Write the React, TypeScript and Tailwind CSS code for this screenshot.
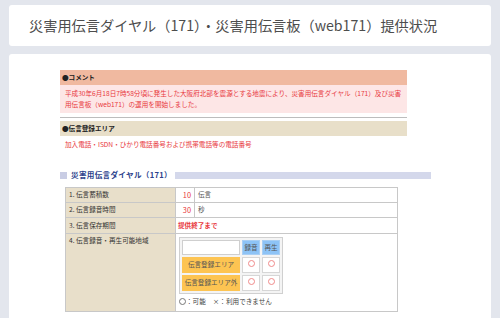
import React from "react";

const Circle = () => (
  <span className="inline-block w-[7px] h-[7px] rounded-full border border-[#f08a8a]" />
);

export default function App() {
  return (
    <div
      className="w-[500px] h-[318px] overflow-hidden bg-[#e3e6ed] px-[9px] pt-[5px] text-[#555]"
      style={{ fontFamily: '"Noto Sans CJK JP", "Noto Sans", sans-serif' }}
    >
      <div className="h-[41px] bg-white rounded-[3px] flex items-center pl-[20px] pr-[10px]">
        <h1 className="text-[14.2px] text-[#4d4d4d] whitespace-nowrap leading-none">
          災害用伝言ダイヤル（171）・災害用伝言板（web171）提供状況
        </h1>
      </div>

      <div className="mt-[8px] h-[300px] bg-white rounded-t-[3px] pt-[16px] pl-[51px] pr-[56px]">
        {/* comment */}
        <div className="w-[347px]">
          <div className="h-[15px] bg-[#f0b9a0] flex items-center pl-[2px] text-[6.6px] font-bold text-[#222]">
            ●コメント
          </div>
          <div className="h-[28px] bg-[#fde6e6] pl-[5px] pr-[4px] pt-[3px] text-[6.6px] leading-[10.5px] text-[#e8383d]">
            平成30年6月18日7時58分頃に発生した大阪府北部を震源とする地震により、災害用伝言ダイヤル（171）及び災害用伝言板（web171）の運用を開始しました。
          </div>
          <div className="mt-[4px] h-px bg-[#bdbdbd]" />
          <div className="mt-[3px] h-[15px] bg-[#e8dfc9] flex items-center pl-[2px] text-[6.6px] font-bold text-[#222]">
            ●伝言登録エリア
          </div>
          <div className="pl-[5px] pt-[4px] h-[20px] text-[6.6px] text-[#e8383d]">
            加入電話・ISDN・ひかり電話番号および携帯電話等の電話番号
          </div>
        </div>

        {/* section heading */}
        <div className="mt-[15px] flex items-center w-[371px] h-[8px]">
          <span className="w-[7px] h-[7px] bg-[#c9cde4]" />
          <span className="ml-[4px] text-[7.6px] font-bold text-[#2c3f8c] tracking-[0.3px] whitespace-nowrap leading-none">
            災害用伝言ダイヤル（171）
          </span>
          <span className="ml-[3px] flex-1 h-[7px] bg-[#d4d8eb]" />
        </div>

        {/* table */}
        <table className="mt-[8px] ml-[5px] w-[333px] border-collapse border border-[#c8c8c8] text-[6.6px]">
          <tbody>
            <tr className="h-[15px]">
              <td className="w-[110px] bg-[#e8dfca] border border-[#c8c8c8] pl-[3px] text-[#333]">1. 伝言蓄積数</td>
              <td className="w-[19px] border border-[#c8c8c8] text-right pr-[3px] text-[#e8383d] text-[7.4px]">10</td>
              <td className="border border-[#c8c8c8] pl-[3px] text-[#555]">伝言</td>
            </tr>
            <tr className="h-[15px]">
              <td className="bg-[#e8dfca] border border-[#c8c8c8] pl-[3px] text-[#333]">2. 伝言録音時間</td>
              <td className="border border-[#c8c8c8] text-right pr-[3px] text-[#e8383d] text-[7.4px]">30</td>
              <td className="border border-[#c8c8c8] pl-[3px] text-[#555]">秒</td>
            </tr>
            <tr className="h-[16px]">
              <td className="bg-[#e8dfca] border border-[#c8c8c8] pl-[3px] text-[#333]">3. 伝言保存期間</td>
              <td colSpan={2} className="border border-[#c8c8c8] pl-[2px] text-[#e8383d] font-bold">提供終了まで</td>
            </tr>
            <tr className="h-[75px]">
              <td className="bg-[#e8dfca] border border-[#c8c8c8] pl-[3px] pt-[2px] align-top text-[#333]">4. 伝言録音・再生可能地域</td>
              <td colSpan={2} className="border border-[#c8c8c8] pl-[3px] pt-[3px] pb-[4px] align-top">
                <table className="border-separate border-spacing-[2px] border border-[#d0d0d0] bg-[#f4f4f4]">
                  <tbody>
                    <tr className="h-[15px]">
                      <td className="w-[58px] bg-white border border-[#cfcfcf]" />
                      <td className="w-[18px] bg-[#8dc3f6] border border-[#a9cff4] text-center text-[#555]">録音</td>
                      <td className="w-[18px] bg-[#8dc3f6] border border-[#a9cff4] text-center text-[#555]">再生</td>
                    </tr>
                    <tr className="h-[16px]">
                      <td className="bg-[#fdc452] text-center text-[#555] whitespace-nowrap">伝言登録エリア</td>
                      <td className="bg-white border border-[#d6d6d6] text-center"><Circle /></td>
                      <td className="bg-white border border-[#d6d6d6] text-center"><Circle /></td>
                    </tr>
                    <tr className="h-[16px]">
                      <td className="bg-[#fdc452] text-center text-[#555] whitespace-nowrap px-[1px]">伝言登録エリア外</td>
                      <td className="bg-white border border-[#d6d6d6] text-center"><Circle /></td>
                      <td className="bg-white border border-[#d6d6d6] text-center"><Circle /></td>
                    </tr>
                  </tbody>
                </table>
                <div className="mt-[3px] flex items-center text-[#444] whitespace-nowrap">
                  <span className="inline-block w-[7px] h-[7px] rounded-full border border-[#777]" />
                  <span>：可能</span>
                  <span className="ml-[7px]">×：利用できません</span>
                </div>
              </td>
            </tr>
          </tbody>
        </table>
      </div>
    </div>
  );
}
